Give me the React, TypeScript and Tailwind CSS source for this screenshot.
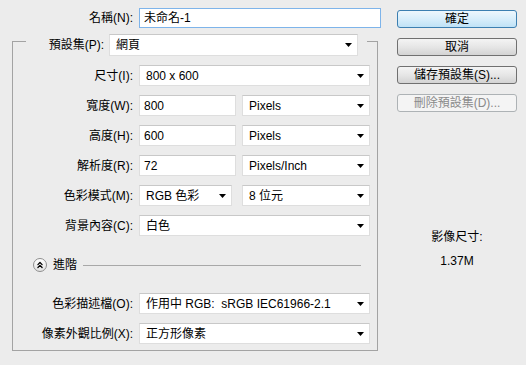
import { ChevronsUp } from "lucide-react";
import type { ReactNode } from "react";

const Arrow = () => (
  <svg width="7" height="4" viewBox="0 0 7 4" className="shrink-0">
    <path d="M0 0h7L3.5 4z" fill="#000" />
  </svg>
);

const Select = ({ value, className }: { value: string; className: string }) => (
  <div
    className={`flex h-[21px] items-center justify-between border border-[#dedede] border-t-[#c8c8c8] bg-white pl-[6px] pr-[5px] ${className}`}
  >
    <span className="whitespace-pre">{value}</span>
    <Arrow />
  </div>
);

const Field = ({ value, className }: { value: string; className: string }) => (
  <div
    className={`flex h-[21px] items-center border border-[#dedede] border-t-[#c8c8c8] bg-white pl-[4px] ${className}`}
  >
    {value}
  </div>
);

const Row = ({ label, className = "", children }: { label: string; className?: string; children: ReactNode }) => (
  <div className={`flex items-center ${className}`}>
    <div className="flex w-[126px] justify-end pr-[6px] whitespace-nowrap">{label}</div>
    {children}
  </div>
);

const Button = ({ label, kind = "normal" }: { label: string; kind?: "default" | "normal" | "disabled" }) => {
  const styles = {
    default: "border-[#3c7fb1] bg-gradient-to-b from-[#eef7fd] via-[#d8eefb] to-[#bfe2f6] text-black",
    normal: "border-[#707070] bg-gradient-to-b from-[#f4f4f4] via-[#e6e6e6] to-[#d3d3d3] text-black",
    disabled: "border-[#adb2b5] bg-[#f4f4f4] text-[#8a8a8a]",
  }[kind];
  return (
    <div className={`flex h-[18px] items-center justify-center rounded-[3px] border ${styles}`}>{label}</div>
  );
};

export default function App() {
  return (
    <div className="flex h-[365px] w-[526px] bg-[#ececec] text-[12px] leading-none text-black font-['Liberation_Sans','Noto_Sans_CJK_TC',sans-serif]">
      {/* left column */}
      <div className="w-[378px] shrink-0">
        <div className="mt-[8px] flex items-center">
          <div className="flex w-[139px] shrink-0 justify-end pr-[6px]">名稱(N):</div>
          <div className="flex h-[20px] w-[242px] shrink-0 items-center border border-[#7eb4ea] bg-white pl-[4px]">未命名-1</div>
        </div>

        <div className="ml-[12px] mt-[6px] w-[366px]">
          {/* group header with preset */}
          <div className="flex h-[22px]">
            <div className="mt-[7px] h-[15px] w-[14px] border-l border-t border-[#a3a3a3]" />
            <div className="flex w-[341px] items-center">
              <div className="flex w-[83px] justify-end pr-[5px]">預設集(P):</div>
              <Select value="網頁" className="h-[22px] w-[249px] pr-[4px]" />
            </div>
            <div className="mt-[7px] h-[15px] w-[11px] border-r border-t border-[#a3a3a3]" />
          </div>

          {/* group body */}
          <div className="flex flex-col border-x border-b border-[#a3a3a3] pb-[6px] pt-[9px]">
            <Row label="尺寸(I):">
              <Select value="800 x 600" className="w-[231px]" />
            </Row>
            <Row label="寬度(W):" className="mt-[9px]">
              <Field value="800" className="w-[97px]" />
              <Select value="Pixels" className="ml-[6px] w-[128px]" />
            </Row>
            <Row label="高度(H):" className="mt-[9px]">
              <Field value="600" className="w-[97px]" />
              <Select value="Pixels" className="ml-[6px] w-[128px]" />
            </Row>
            <Row label="解析度(R):" className="mt-[9px]">
              <Field value="72" className="w-[97px]" />
              <Select value="Pixels/Inch" className="ml-[6px] w-[128px]" />
            </Row>
            <Row label="色彩模式(M):" className="mt-[9px]">
              <Select value="RGB 色彩" className="w-[93px] pr-[4px]" />
              <Select value="8 位元" className="ml-[10px] w-[128px]" />
            </Row>
            <Row label="背景內容(C):" className="mt-[9px]">
              <Select value="白色" className="w-[231px]" />
            </Row>

            <div className="ml-[20px] mr-[16px] mt-[22px] flex h-[14px] items-center">
              <div className="flex h-[14px] w-[14px] items-center justify-center rounded-full border border-[#8e8e8e] bg-gradient-to-b from-white to-[#e2e2e2]">
                <ChevronsUp size={10} strokeWidth={3} color="#000" />
              </div>
              <span className="ml-[6px]">進階</span>
              <div className="ml-[6px] h-px flex-1 bg-[#a8a8a8]" />
            </div>

            <Row label="色彩描述檔(O):" className="mt-[21px]">
              <Select value="作用中 RGB:  sRGB IEC61966-2.1" className="w-[231px]" />
            </Row>
            <Row label="像素外觀比例(X):" className="mt-[9px]">
              <Select value="正方形像素" className="w-[231px]" />
            </Row>
          </div>
        </div>
      </div>

      {/* right column */}
      <div className="ml-[19px] flex w-[120px] flex-col">
        <div className="mt-[10px] flex flex-col gap-[10px]">
          <Button label="確定" kind="default" />
          <Button label="取消" />
          <Button label="儲存預設集(S)..." />
          <Button label="刪除預設集(D)..." kind="disabled" />
        </div>
        <div className="mt-[117px] flex flex-col items-center">
          <div className="leading-[16px]">影像尺寸:</div>
          <div className="mt-[8px] leading-[16px]">1.37M</div>
        </div>
      </div>
    </div>
  );
}
